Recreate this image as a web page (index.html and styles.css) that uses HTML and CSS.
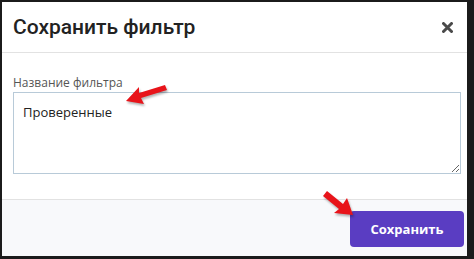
FILE: index.html
```html
<!DOCTYPE html>
<html lang="ru">
<head>
  <meta charset="UTF-8" />
  <title>Сохранить фильтр</title>
  <link rel="stylesheet" href="styles.css">
</head>
<body>
  <div class="modal">
    <div class="modal-header">
      <h2>Сохранить фильтр</h2>
      <svg class="close" width="11" height="11" viewBox="0 0 11 11">
        <path d="M1.5 1.5 L9.5 9.5 M9.5 1.5 L1.5 9.5" stroke="#4a4a4a" stroke-width="3" stroke-linecap="round"/>
      </svg>
    </div>
    <div class="modal-body">
      <label for="filterName">Название фильтра</label>
      <textarea id="filterName">Проверенные</textarea>
    </div>
    <div class="modal-footer">
      <button class="btn-save">Сохранить</button>
    </div>

    <!-- pointer arrows drawn on top of the form -->
    <svg class="arrow arrow-field" width="46" height="24" viewBox="0 0 46 24">
      <polygon points="2,19 15,5 15,11 41,3 43,8 17,16 20,22" fill="#e8141a"/>
    </svg>
    <svg class="arrow arrow-btn" width="36" height="30" viewBox="0 0 36 30">
      <polygon points="33,27 14,25 19,21 3,8 7,3 23,16 27,10" fill="#e8141a"/>
    </svg>
  </div>
</body>
</html>
```

FILE: styles.css
```css
body {
  margin: 0;
  background: #1b1b1b;
  font-family: 'Open Sans', 'Noto Sans', sans-serif;
}
.modal {
  position: relative;
  width: 465px;
  height: 254px;
  margin: 2px 0 0 2px;
  background: #ffffff;
  display: flex;
  flex-direction: column;
}
.modal-header {
  height: 50px;
  border-bottom: 1px solid #e2e2e2;
  display: flex;
  align-items: center;
  justify-content: space-between;
  padding: 0 14px 0 11px;
}
.modal-header h2 {
  margin: 0;
  font-family: 'Roboto', sans-serif;
  font-weight: 500;
  font-size: 21px;
  color: #222;
}
.close {
  margin-top: 1px;
}
.modal-body {
  height: 146px;
  padding: 22px 4px 0 11px;
  box-sizing: border-box;
  display: flex;
  flex-direction: column;
}
.modal-body label {
  font-size: 12px;
  color: #555;
  line-height: 15px;
  margin-bottom: 2px;
}
.modal-body textarea {
  width: 448px;
  height: 82px;
  box-sizing: border-box;
  border: 1px solid #b8cad8;
  padding: 10px 9px;
  font-family: 'Open Sans', sans-serif;
  font-size: 13px;
  color: #222;
  resize: vertical;
}
.modal-footer {
  flex: 1;
  border-top: 1px solid #e2e2e2;
  background: #f8f9fb;
  display: flex;
  align-items: center;
  justify-content: flex-end;
  padding-right: 3px;
}
.btn-save {
  width: 114px;
  height: 36px;
  margin-top: 2px;
  border: none;
  border-radius: 4px;
  background: #5a3dc2;
  color: #fff;
  font-family: 'Open Sans', sans-serif;
  font-weight: 700;
  font-size: 13px;
}
.arrow {
  position: absolute;
  filter: drop-shadow(1px 2px 1px rgba(0,0,0,0.3));
}
.arrow-field {
  left: 122px;
  top: 80px;
}
.arrow-btn {
  left: 318px;
  top: 186px;
}
```
